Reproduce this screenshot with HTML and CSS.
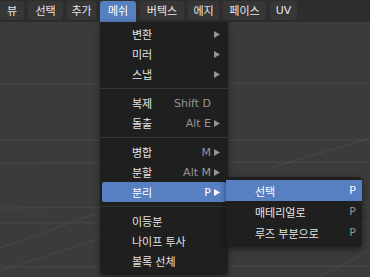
FILE: index.html
```html
<!DOCTYPE html>
<html lang="ko">
<head>
<meta charset="utf-8">
<link rel="stylesheet" href="styles.css">
</head>
<body>
<div class="app">
  <div class="header">
    <div class="hitem">뷰</div>
    <div class="hitem">선택</div>
    <div class="hitem">추가</div>
    <div class="hitem active">메쉬</div>
    <div class="hitem">버텍스</div>
    <div class="hitem">에지</div>
    <div class="hitem">페이스</div>
    <div class="hitem latin">UV</div>
  </div>
  <div class="viewport">
    <svg class="grid" width="370" height="255" viewBox="0 22 370 255" preserveAspectRatio="none">
      <g stroke="#ffffff" stroke-opacity="0.07" stroke-width="1" fill="none">
        <line x1="0" y1="84" x2="370" y2="83"/>
        <line x1="0" y1="163" x2="370" y2="162"/>
        <line x1="0" y1="140" x2="370" y2="140"/>
        <line x1="0" y1="208" x2="370" y2="207"/>
        <line x1="0" y1="223" x2="370" y2="222"/>
        <line x1="0" y1="267" x2="370" y2="266"/>
        <line x1="0" y1="248" x2="120" y2="205"/>
        <line x1="0" y1="271" x2="100" y2="238"/>
        <line x1="270" y1="168" x2="370" y2="138"/>
        <line x1="320" y1="277" x2="370" y2="250"/>
      </g>
    </svg>
  </div>

  <div class="menu">
    <div class="row"><span class="label">변환</span><span class="key"></span><span class="arrow"><svg width="6" height="7" viewBox="0 0 6 7"><path d="M0 0 L6 3.5 L0 7 Z"/></svg></span></div>
    <div class="row"><span class="label">미러</span><span class="key"></span><span class="arrow"><svg width="6" height="7" viewBox="0 0 6 7"><path d="M0 0 L6 3.5 L0 7 Z"/></svg></span></div>
    <div class="row"><span class="label">스냅</span><span class="key"></span><span class="arrow"><svg width="6" height="7" viewBox="0 0 6 7"><path d="M0 0 L6 3.5 L0 7 Z"/></svg></span></div>
    <div class="sep"></div>
    <div class="row"><span class="label">복제</span><span class="key">Shift D</span><span class="arrow"></span></div>
    <div class="row"><span class="label">돌출</span><span class="key">Alt E</span><span class="arrow"><svg width="6" height="7" viewBox="0 0 6 7"><path d="M0 0 L6 3.5 L0 7 Z"/></svg></span></div>
    <div class="sep"></div>
    <div class="row"><span class="label">병합</span><span class="key">M</span><span class="arrow"><svg width="6" height="7" viewBox="0 0 6 7"><path d="M0 0 L6 3.5 L0 7 Z"/></svg></span></div>
    <div class="row"><span class="label">분할</span><span class="key">Alt M</span><span class="arrow"><svg width="6" height="7" viewBox="0 0 6 7"><path d="M0 0 L6 3.5 L0 7 Z"/></svg></span></div>
    <div class="row hl"><span class="label">분리</span><span class="key">P</span><span class="arrow"><svg width="6" height="7" viewBox="0 0 6 7"><path d="M0 0 L6 3.5 L0 7 Z"/></svg></span></div>
    <div class="sep"></div>
    <div class="row"><span class="label">이등분</span></div>
    <div class="row"><span class="label">나이프 투사</span></div>
    <div class="row"><span class="label">볼록 선체</span></div>
  </div>

  <div class="submenu">
    <div class="srow hl"><span class="label">선택</span><span class="key">P</span></div>
    <div class="srow"><span class="label">매테리얼로</span><span class="key">P</span></div>
    <div class="srow"><span class="label">루즈 부분으로</span><span class="key">P</span></div>
  </div>
</div>
</body>
</html>
```

FILE: styles.css
```css
html, body {
  margin: 0;
  padding: 0;
}
body {
  width: 370px;
  height: 277px;
  overflow: hidden;
  background: #3a3a3a;
  font-family: "DejaVu Sans", "Noto Sans CJK KR", sans-serif;
  font-size: 11px;
  color: #e4e4e4;
}
.app {
  position: relative;
  width: 370px;
  height: 277px;
  display: flex;
  flex-direction: column;
}
.header {
  height: 22px;
  flex: none;
  background: #2d2d2d;
  display: grid;
  grid-template-columns: 24px 35px 29px 36px 44px 31px 43px 27px;
  column-gap: 4px;
  padding-top: 1px;
  box-sizing: border-box;
  align-items: start;
}
.hitem {
  height: 19px;
  line-height: 19px;
  text-align: center;
  background: #363636;
  border-radius: 3px;
  color: #e6e6e6;
  font-family: "Noto Sans CJK KR", "DejaVu Sans", sans-serif;
}
.hitem.latin {
  font-family: "DejaVu Sans", sans-serif;
}
.hitem.active {
  background: #5680c2;
  color: #ffffff;
  height: 21px;
  border-radius: 3px 3px 0 0;
}
.viewport {
  flex: 1;
  background: #3b3b3b;
  position: relative;
  overflow: hidden;
}
.grid {
  display: block;
}
.menu {
  position: absolute;
  left: 100px;
  top: 22px;
  width: 128px;
  box-sizing: border-box;
  padding: 2px 0 4px;
  background: #1f1f1f;
  border-radius: 0 0 4px 4px;
  box-shadow: 0 2px 6px rgba(0, 0, 0, 0.45);
}
.row {
  height: 20px;
  display: flex;
  align-items: center;
  padding: 0 5px 0 30px;
  margin: 0 2px;
  border-radius: 2px;
}
.label {
  flex: 1;
  font-family: "Noto Sans CJK KR", "DejaVu Sans", sans-serif;
  white-space: nowrap;
}
.key {
  color: #959595;
  white-space: nowrap;
}
.arrow {
  width: 9px;
  margin-left: 1px;
  display: flex;
  align-items: center;
  justify-content: center;
}
.arrow svg {
  fill: #959595;
}
.row.hl {
  background: #5680c2;
  color: #ffffff;
}
.row.hl .key {
  color: #ffffff;
}
.row.hl .arrow svg {
  fill: #ffffff;
}
.sep {
  height: 9px;
  display: flex;
  align-items: center;
}
.sep::after {
  content: "";
  display: block;
  width: 100%;
  height: 1px;
  background: #363636;
}
.submenu {
  position: absolute;
  left: 226px;
  top: 177px;
  width: 136px;
  box-sizing: border-box;
  padding: 3px 0 4px;
  background: #1f1f1f;
  border-radius: 4px;
  box-shadow: 0 2px 6px rgba(0, 0, 0, 0.5);
}
.srow {
  height: 21px;
  display: flex;
  align-items: center;
  padding: 0 6px 0 29px;
}
.srow.hl {
  background: #5680c2;
  color: #ffffff;
}
.srow.hl .key {
  color: #ffffff;
}
```
